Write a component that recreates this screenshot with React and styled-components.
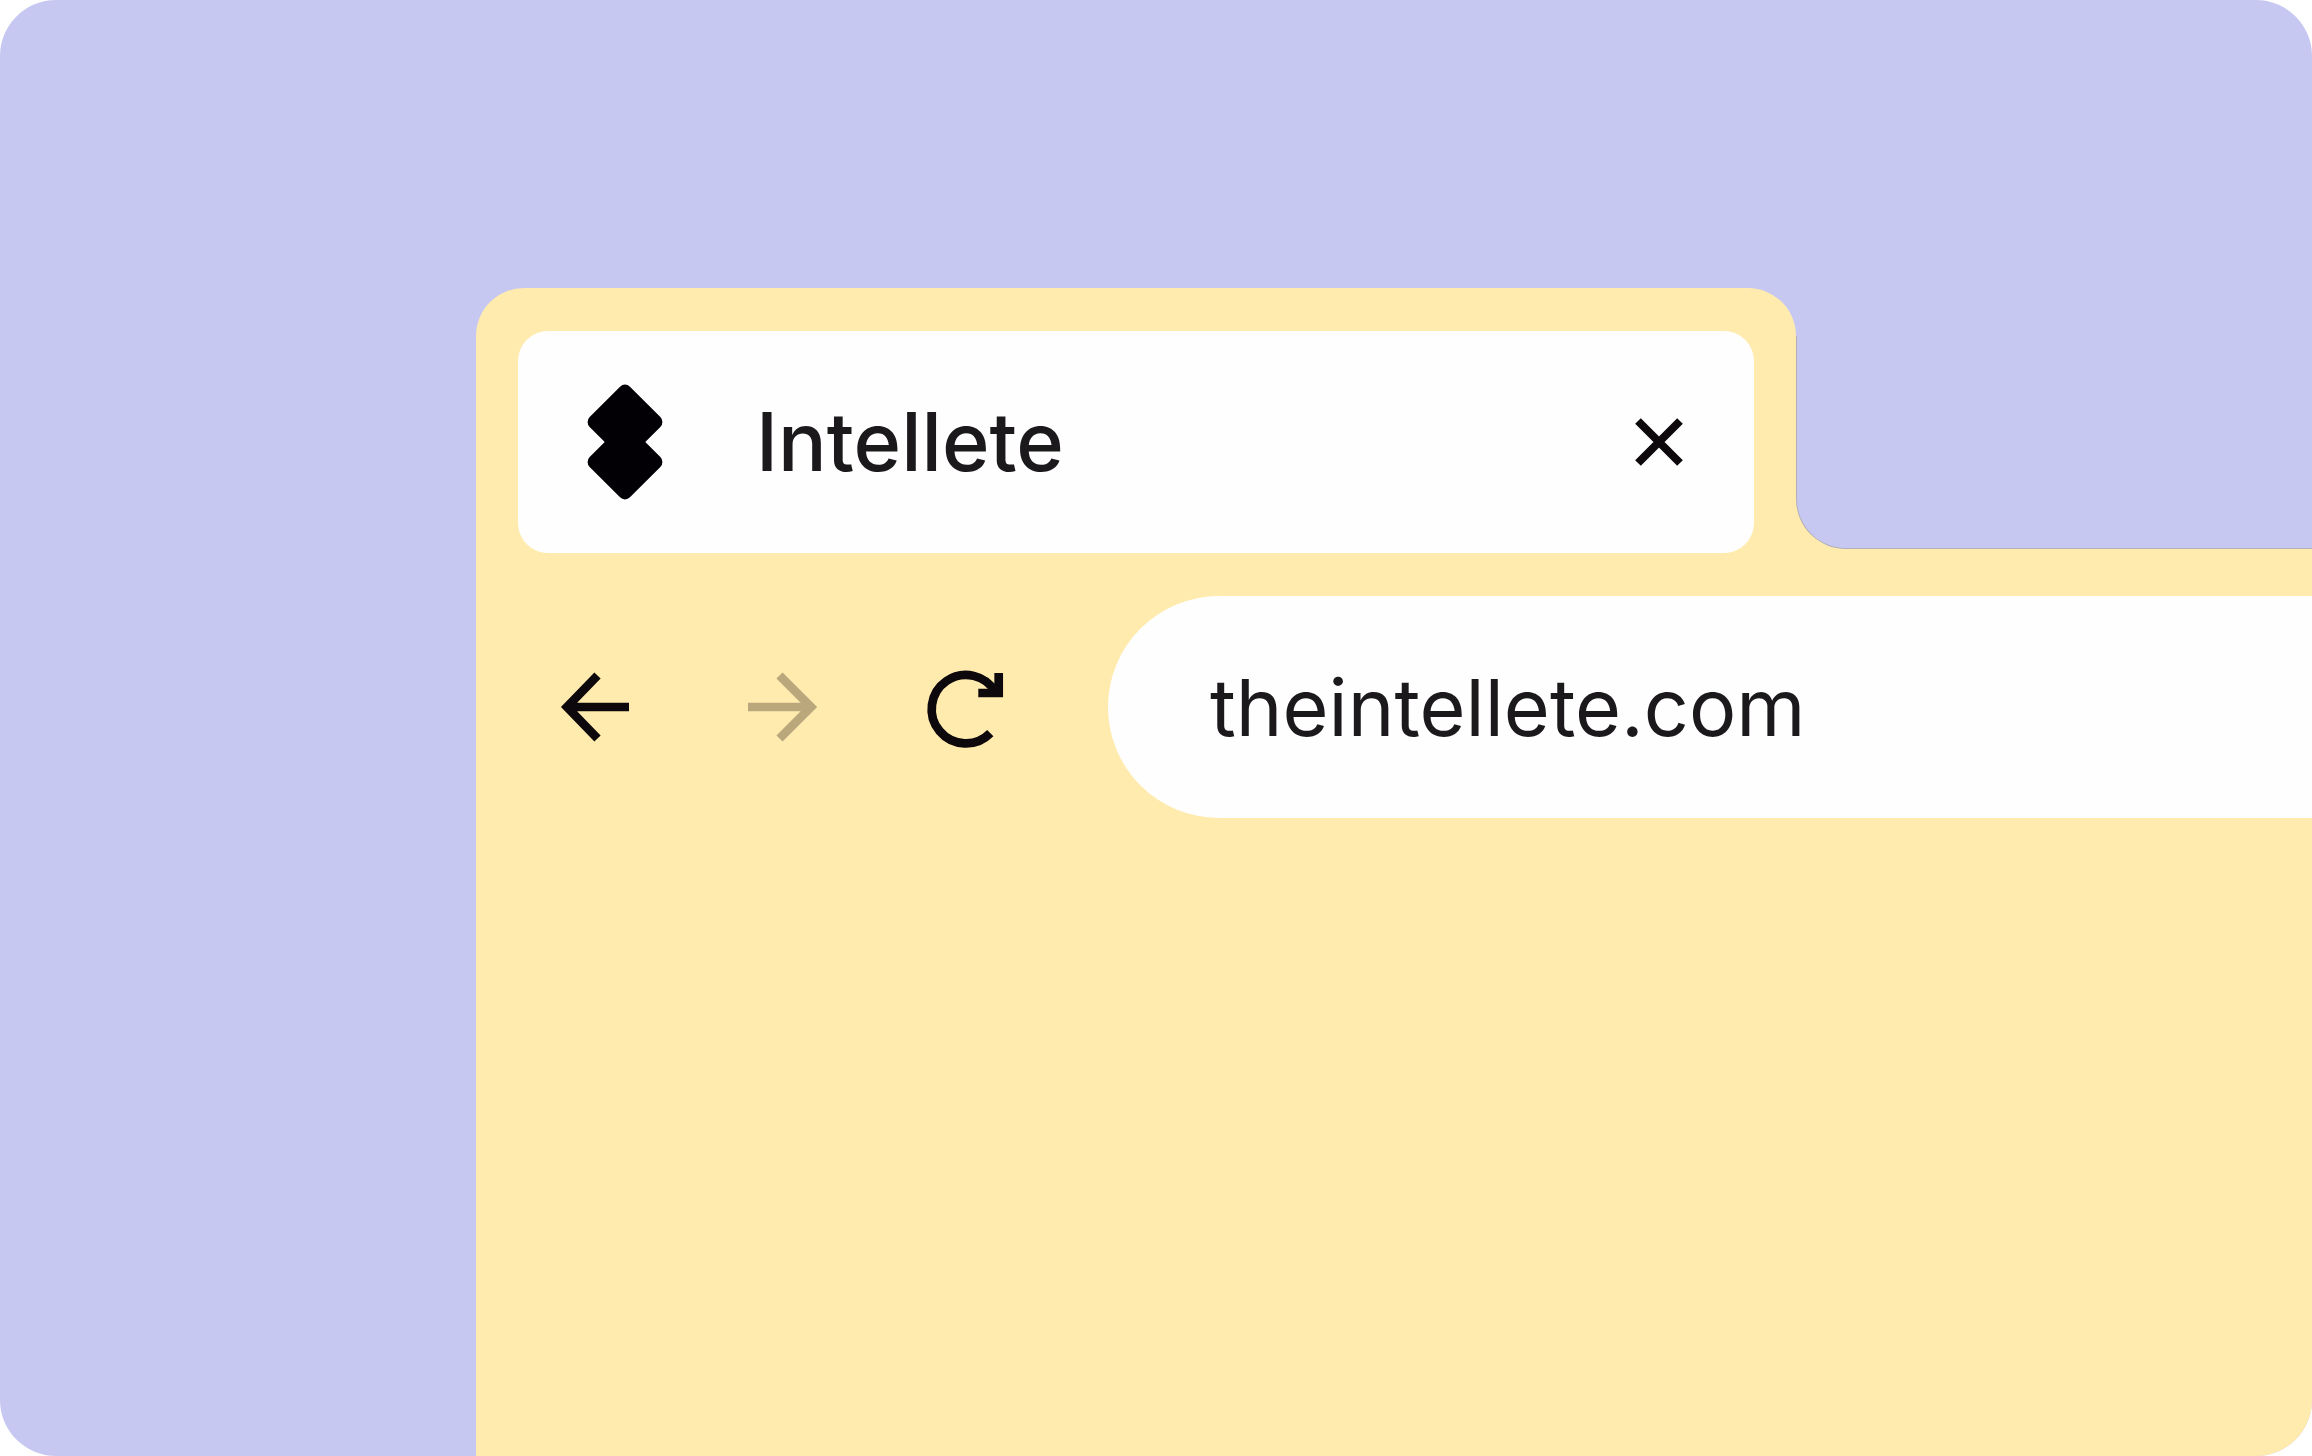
import React from "react";
import styled, { createGlobalStyle } from "styled-components";

const lilac = "#c6c8f1";
const butter = "#ffebae";
const ink = "#1b191c";

const GlobalStyle = createGlobalStyle`
  *, *::before, *::after { box-sizing: border-box; }
  body {
    margin: 0;
    background: #ffffff;
    font-family: Inter, "Liberation Sans", sans-serif;
    color: ${ink};
  }
`;

const Stage = styled.main`
  display: flex;
  flex-direction: column;
  min-height: 100vh;
  padding: 288px 0 0 476px;
  border-radius: 56px;
  background: ${lilac};
  overflow: hidden;
`;

const BrowserWindow = styled.section`
  display: flex;
  flex: 1;
  flex-direction: column;
`;

const TabStrip = styled.header`
  display: flex;
`;

const TabFrame = styled.div`
  flex: 0 1 1320px;
  padding: 43px 42px 0;
  border-radius: 48px 48px 0 0;
  background: ${butter};
`;

const Tab = styled.div`
  display: flex;
  align-items: center;
  height: 222px;
  padding: 0 71px 0 69px;
  border-radius: 30px;
  background: #fefefe;
`;

const TabTitle = styled.h1`
  flex: 1;
  margin: 0 0 0 93px;
  font-size: 81px;
  font-weight: 500;
  line-height: 100px;
`;

const StripRest = styled.div`
  display: flex;
  flex: 1;
  flex-direction: column;
  padding-bottom: 4px;
  background: ${butter};
`;

const StripTop = styled.div`
  height: 48px;
  background: ${lilac};
`;

const StripCorner = styled.div`
  flex: 1;
  border: solid #b3b0bd;
  border-width: 0 0 1px 1px;
  border-bottom-left-radius: 50px;
  background: ${lilac};
`;

const Body = styled.div`
  flex: 1;
  background: ${butter};
`;

const Toolbar = styled.nav`
  display: flex;
  align-items: center;
  gap: 75px;
  padding: 43px 0 0 63px;
`;

const IconButton = styled.button`
  display: flex;
  flex: none;
  padding: 0;
  border: 0;
  background: none;
  color: #0c080b;

  &:disabled { color: #baa77c; }
`;

const Icon = styled.svg`
  display: block;
  flex: none;
  width: ${(p) => p.$size}px;
  height: ${(p) => p.$size}px;
  fill: none;
  stroke: currentColor;
  stroke-width: ${(p) => p.$stroke};
`;

const Logo = styled.svg`
  display: block;
  flex: none;
  width: 76px;
  height: 118px;
  fill: #020004;
`;

const AddressBar = styled.input`
  flex: 1;
  min-width: 0;
  height: 222px;
  margin: 0 0 0 8px;
  padding: 0 0 0 102px;
  border: 0;
  border-radius: 111px 0 0 111px;
  outline: 0;
  background: #fefefe;
  color: ${ink};
  font-family: inherit;
  font-size: 79px;
  font-weight: 400;
`;

export default function App() {
  return (
    <>
      <GlobalStyle />
      <Stage>
        <BrowserWindow>
          <TabStrip>
            <TabFrame>
              <Tab>
                <Logo viewBox="0 0 76 118" aria-hidden="true">
                  <rect x="9.5" y="10.5" width="57" height="57" rx="7" transform="rotate(45 38 39)" />
                  <rect x="9.5" y="50.5" width="57" height="57" rx="7" transform="rotate(45 38 79)" />
                </Logo>
                <TabTitle>Intellete</TabTitle>
                <IconButton type="button" aria-label="Close tab">
                  <Icon viewBox="0 0 48 48" $size={48} $stroke={8}>
                    <path d="M3 3 45 45M45 3 3 45" />
                  </Icon>
                </IconButton>
              </Tab>
            </TabFrame>
            <StripRest>
              <StripTop />
              <StripCorner />
            </StripRest>
          </TabStrip>
          <Body>
            <Toolbar>
              <IconButton type="button" aria-label="Back">
                <Icon viewBox="0 0 112 112" $size={112} $stroke={8.7}>
                  <path d="M58.5 24.5 28 56 58.5 87.5M28 56H90" />
                </Icon>
              </IconButton>
              <IconButton type="button" aria-label="Forward" disabled>
                <Icon viewBox="0 0 112 112" $size={112} $stroke={8.7}>
                  <path d="M53.5 24.5 85 56 53.5 87.5M85 56H22" />
                </Icon>
              </IconButton>
              <IconButton type="button" aria-label="Reload">
                <Icon viewBox="0 0 112 112" $size={112} $stroke={8.7}>
                  <path d="M77.3 82.1A34.2 34.2 0 1 1 82.8 41.6" />
                  <path d="M85.7 22V42H65.3" />
                </Icon>
              </IconButton>
              <AddressBar type="text" aria-label="Address" defaultValue="theintellete.com" spellCheck={false} />
            </Toolbar>
          </Body>
        </BrowserWindow>
      </Stage>
    </>
  );
}
